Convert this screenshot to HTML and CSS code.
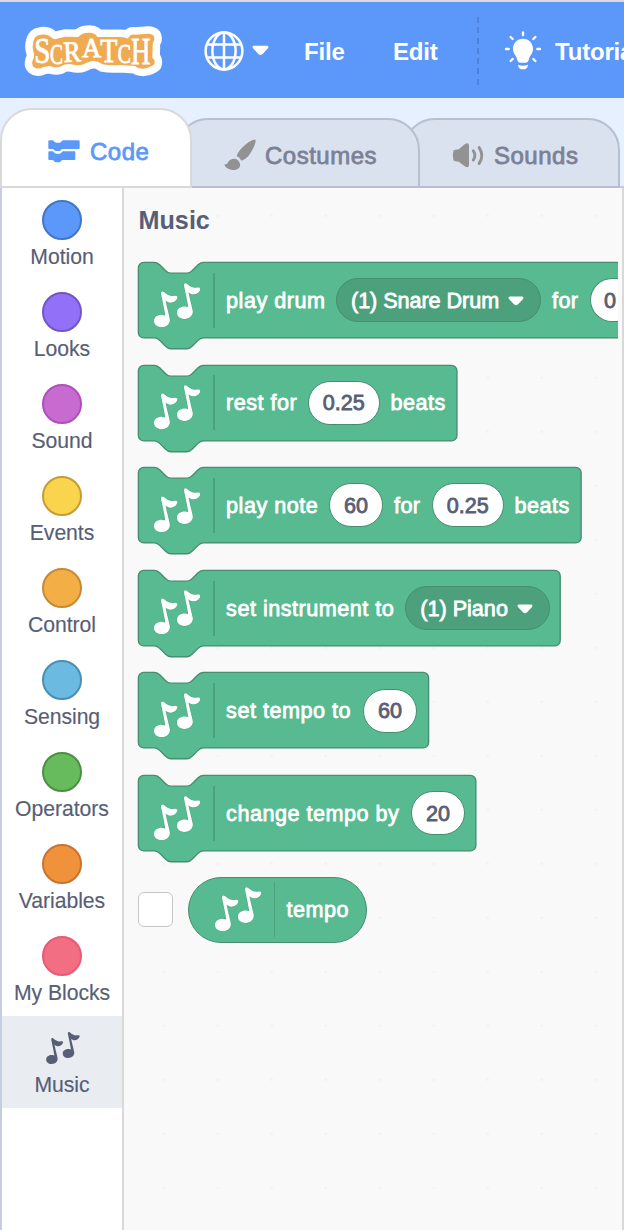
FILE: index.html
```
<!DOCTYPE html>
<html lang="en">
<head>
<meta charset="utf-8">
<title>Scratch - Music extension</title>
<link rel="stylesheet" href="styles.css">
</head>
<body>
<svg class="defs" aria-hidden="true">
  <defs>
    <symbol id="notes" viewBox="102 264 140 133">
      <path d="M123 296C123 289 128 288 132 291C141 299 150 304 160 303C169 301 174 303 172 309C169 319 155 326 145 322C142 321 139 319 137 317C139 330 145 352 149 370C153 385 141 397 125 397C110 397 102 388 102 378C102 366 115 359 127 360C131 360 134 361 136 362C134 345 127 315 123 296Z"/>
      <path d="M123 296C123 289 128 288 132 291C141 299 150 304 160 303C169 301 174 303 172 309C169 319 155 326 145 322C142 321 139 319 137 317C139 330 145 352 149 370C153 385 141 397 125 397C110 397 102 388 102 378C102 366 115 359 127 360C131 360 134 361 136 362C134 345 127 315 123 296Z" transform="translate(69 -25)"/>
    </symbol>
    <symbol id="arrow" viewBox="0 0 16 10">
      <path d="M2.2 0.6H13.8C15.6 0.6 16 2 14.8 3.2L9.8 8.6Q8 10 6.2 8.6L1.2 3.2C0 2 .4 .6 2.2 .6Z"/>
    </symbol>
  </defs>
</svg>

<header class="menu">
  <svg class="logo" viewBox="72 72 417 156">
    <path class="logo-edge" d="M100 122Q104 103 122 101Q144 97 157 112Q164 117 176 112L196 107L235 108Q246 94 270 95Q286 96 292 108L362 108Q374 108 384 113Q390 99 405 101L445 98Q465 98 463 116Q457 124 458 140L457 170Q467 178 463 190Q452 200 430 203Q414 203 405 195Q380 194 362 192Q330 194 308 190Q296 181 280 179Q262 183 250 190Q235 196 214 190Q195 187 180 197Q165 201 150 195Q140 196 130 198Q112 207 101 198Q94 191 98 178Q106 168 100 150Q96 138 100 122Z"/>
    <path class="logo-fill" d="M100 122Q104 103 122 101Q144 97 157 112Q164 117 176 112L196 107L235 108Q246 94 270 95Q286 96 292 108L362 108Q374 108 384 113Q390 99 405 101L445 98Q465 98 463 116Q457 124 458 140L457 170Q467 178 463 190Q452 200 430 203Q414 203 405 195Q380 194 362 192Q330 194 308 190Q296 181 280 179Q262 183 250 190Q235 196 214 190Q195 187 180 197Q165 201 150 195Q140 196 130 198Q112 207 101 198Q94 191 98 178Q106 168 100 150Q96 138 100 122Z"/>
    <g class="logo-text">
      <text transform="translate(103 186) scale(.8 1)" font-size="109">S</text>
      <text transform="translate(150 189) scale(.68 1)" font-size="86">C</text>
      <text transform="translate(192 183) rotate(-3) scale(.88 1)" font-size="88">R</text>
      <text transform="translate(246 168) scale(.95 1)" font-size="84">A</text>
      <text transform="translate(301 184) scale(.86 1)" font-size="98">T</text>
      <text transform="translate(353 186) scale(.74 1)" font-size="80">C</text>
      <text transform="translate(393 188) scale(.72 1)" font-size="112">H</text>
    </g>
  </svg>
  <svg class="globe" viewBox="0 0 40 40">
    <circle cx="20" cy="20" r="18.4"/>
    <ellipse cx="20" cy="20" rx="11.6" ry="18.4"/>
    <path d="M20 1.6V38.4M4 13.5H36M4 26.5H36"/>
  </svg>
  <svg class="menu-arrow"><use href="#arrow"/></svg>
  <span class="menu-item file">File</span>
  <span class="menu-item edit">Edit</span>
  <span class="divider"></span>
  <svg class="bulb" viewBox="0 0 108 116">
    <path class="solid" d="M54 23C72 23 84 37 84 53C84 66 77 71 73 80L70 90Q68 95 62 95H46Q40 95 38 90L35 80C31 71 24 66 24 53C24 37 36 23 54 23ZM39 101Q54 107 69 101Q68 115 54 115Q40 115 39 101Z"/>
    <path class="rays" d="M54 4V12M17 18L23 24M91 18L85 24M3 54H11M97 54H105M17 90L23 84M91 90L85 84"/>
  </svg>
  <span class="menu-item">Tutorials</span>
</header>

<nav class="tabs">
  <div class="tab selected">
    <svg class="code-icon" viewBox="0 0 96 68">
      <path d="M4 1H13C18 1 18 8 25 8H34C41 8 41 1 46 1H92Q95 1 95 4V24Q95 27 92 27H44C39 27 39 33 33 33H25C18 33 18 27 13 27H4Q1 27 1 24V4Q1 1 4 1Z"/>
      <path d="M4 34H13C18 34 18 41 25 41H34C41 41 41 34 46 34H79Q82 34 82 37V57Q82 60 79 60H44C39 60 39 67 33 67H25C18 67 18 60 13 60H4Q1 60 1 57V37Q1 34 4 34Z"/>
    </svg>
    <span>Code</span>
  </div>
  <div class="tab costumes">
    <svg class="brush-icon" viewBox="0 0 96 96">
      <path d="M94 2C98 7 88 32 76 47C70 55 61 62 52 65C48 58 44 54 38 52C41 41 49 31 59 22C71 10 89 0 94 2Z"/>
      <path d="M1 76C10 77 10 74 14 67C20 58 36 56 43 65C50 72 50 82 44 88C33 99 5 92 1 76Z"/>
    </svg>
    <span>Costumes</span>
  </div>
  <div class="tab sounds">
    <svg class="sound-icon" viewBox="0 0 96 76">
      <path d="M4 23Q8 20 20 19L38 4Q50 -3 51 7V67Q50 78 38 71L20 57Q8 56 4 53Q-1 38 4 23Z"/>
      <path class="wave" d="M64 24Q74 38 64 52M82 14Q98 38 82 62"/>
    </svg>
    <span>Sounds</span>
  </div>
</nav>

<main class="workspace">
  <aside class="categories">
    <div class="category"><i class="dot motion"></i>Motion</div>
    <div class="category"><i class="dot looks"></i>Looks</div>
    <div class="category"><i class="dot sound"></i>Sound</div>
    <div class="category"><i class="dot events"></i>Events</div>
    <div class="category"><i class="dot control"></i>Control</div>
    <div class="category"><i class="dot sensing"></i>Sensing</div>
    <div class="category"><i class="dot operators"></i>Operators</div>
    <div class="category"><i class="dot variables"></i>Variables</div>
    <div class="category"><i class="dot my-blocks"></i>My Blocks</div>
    <div class="category current"><svg class="category-notes"><use href="#notes"/></svg>Music</div>
  </aside>

  <section class="palette">
    <h2>Music</h2>
    <div class="block">
      <svg class="shape" viewBox="-1 -1 400 66"><path d="M0 4A4 4 0 0 1 4 0H12c2 0 3 1 4 2l4 4c1 1 2 2 4 2h12c2 0 3-1 4-2l4-4c1-1 2-2 4-2H391a4 4 0 0 1 4 4V52a4 4 0 0 1-4 4H48c-2 0-3 1-4 2l-4 4c-1 1-2 2-4 2h-12c-2 0-3-1-4-2l-4-4c-1-1-2-2-4-2H4a4 4 0 0 1-4-4z"/></svg>
      <div class="row"><svg class="notes"><use href="#notes"/></svg><span class="rule"></span>
        <span class="label drum-label">play drum</span><span class="menu-pill drum"><b>(1) Snare Drum</b><svg><use href="#arrow"/></svg></span><span class="label for">for</span><span class="value cut">0</span></div>
    </div>
    <div class="block">
      <svg class="shape" viewBox="-1 -1 400 66"><path d="M0 4A4 4 0 0 1 4 0H12c2 0 3 1 4 2l4 4c1 1 2 2 4 2h12c2 0 3-1 4-2l4-4c1-1 2-2 4-2H232a4 4 0 0 1 4 4V52a4 4 0 0 1-4 4H48c-2 0-3 1-4 2l-4 4c-1 1-2 2-4 2h-12c-2 0-3-1-4-2l-4-4c-1-1-2-2-4-2H4a4 4 0 0 1-4-4z"/></svg>
      <div class="row"><svg class="notes"><use href="#notes"/></svg><span class="rule"></span>
        <span class="label rest-label">rest for</span><span class="value wide">0.25</span><span class="label">beats</span></div>
    </div>
    <div class="block">
      <svg class="shape" viewBox="-1 -1 400 66"><path d="M0 4A4 4 0 0 1 4 0H12c2 0 3 1 4 2l4 4c1 1 2 2 4 2h12c2 0 3-1 4-2l4-4c1-1 2-2 4-2H324a4 4 0 0 1 4 4V52a4 4 0 0 1-4 4H48c-2 0-3 1-4 2l-4 4c-1 1-2 2-4 2h-12c-2 0-3-1-4-2l-4-4c-1-1-2-2-4-2H4a4 4 0 0 1-4-4z"/></svg>
      <div class="row"><svg class="notes"><use href="#notes"/></svg><span class="rule"></span>
        <span class="label note-label">play note</span><span class="value">60</span><span class="label for">for</span><span class="value wide">0.25</span><span class="label">beats</span></div>
    </div>
    <div class="block">
      <svg class="shape" viewBox="-1 -1 400 66"><path d="M0 4A4 4 0 0 1 4 0H12c2 0 3 1 4 2l4 4c1 1 2 2 4 2h12c2 0 3-1 4-2l4-4c1-1 2-2 4-2H308.500a4 4 0 0 1 4 4V52a4 4 0 0 1-4 4H48c-2 0-3 1-4 2l-4 4c-1 1-2 2-4 2h-12c-2 0-3-1-4-2l-4-4c-1-1-2-2-4-2H4a4 4 0 0 1-4-4z"/></svg>
      <div class="row"><svg class="notes"><use href="#notes"/></svg><span class="rule"></span>
        <span class="label instrument-label">set instrument to</span><span class="menu-pill piano"><b>(1) Piano</b><svg><use href="#arrow"/></svg></span></div>
    </div>
    <div class="block">
      <svg class="shape" viewBox="-1 -1 400 66"><path d="M0 4A4 4 0 0 1 4 0H12c2 0 3 1 4 2l4 4c1 1 2 2 4 2h12c2 0 3-1 4-2l4-4c1-1 2-2 4-2H211a4 4 0 0 1 4 4V52a4 4 0 0 1-4 4H48c-2 0-3 1-4 2l-4 4c-1 1-2 2-4 2h-12c-2 0-3-1-4-2l-4-4c-1-1-2-2-4-2H4a4 4 0 0 1-4-4z"/></svg>
      <div class="row"><svg class="notes"><use href="#notes"/></svg><span class="rule"></span>
        <span class="label set-label">set tempo to</span><span class="value">60</span></div>
    </div>
    <div class="block">
      <svg class="shape" viewBox="-1 -1 400 66"><path d="M0 4A4 4 0 0 1 4 0H12c2 0 3 1 4 2l4 4c1 1 2 2 4 2h12c2 0 3-1 4-2l4-4c1-1 2-2 4-2H246a4 4 0 0 1 4 4V52a4 4 0 0 1-4 4H48c-2 0-3 1-4 2l-4 4c-1 1-2 2-4 2h-12c-2 0-3-1-4-2l-4-4c-1-1-2-2-4-2H4a4 4 0 0 1-4-4z"/></svg>
      <div class="row"><svg class="notes"><use href="#notes"/></svg><span class="rule"></span>
        <span class="label change-label">change tempo by</span><span class="value">20</span></div>
    </div>
    <div class="reporter-row">
      <span class="checkbox"></span>
      <div class="reporter"><svg class="notes"><use href="#notes"/></svg><span class="rule"></span><span class="label">tempo</span></div>
    </div>
  </section>
</main>
</body>
</html>
```
FILE: styles.css
```
* { box-sizing: border-box; }
body {
  margin: 0;
  width: 624px;
  height: 1230px;
  overflow: hidden;
  display: flex;
  flex-direction: column;
  background: #e6f0ff;
  font-family: "Liberation Sans", Arial, sans-serif;
  color: #575e75;
}
.defs { display: none; }
svg { flex: none; overflow: visible; }

.menu {
  height: 98px;
  flex: none;
  display: flex;
  align-items: center;
  padding: 1px 0 0 24px;
  background: #5c98f9;
  border-top: 2px solid #d9d9df;
  white-space: nowrap;
  overflow: hidden;
}
.menu > * { flex: none; }
.logo { width: 139px; height: 52px; }
.logo-edge { fill: #fff; stroke: #fff; stroke-width: 45; stroke-linejoin: round; }
.logo-fill { fill: #efaa52; }
.logo-text {
  font-family: "Liberation Serif", serif;
  fill: #fff;
  stroke: #fff;
  stroke-width: 2.5;
}
.globe { width: 40px; height: 40px; margin-left: 41px; }
.globe * { fill: none; stroke: #fff; stroke-width: 2.5; }
.menu-arrow { width: 17px; height: 11px; margin-left: 8px; fill: #fff; }
.menu-item { font-weight: 700; font-size: 24px; line-height: 28px; padding-top: 2px; color: #fff; letter-spacing: -.2px; }
.file { width: 89px; margin-left: 35px; }
.edit { width: 84px; }
.divider {
  width: 2px;
  height: 68px;
  background: repeating-linear-gradient(#4c82dc 0 6px, transparent 6px 10.3px);
}
.bulb { width: 36px; height: 38.7px; margin: 0 14px 0 26px; }
.bulb .solid { fill: #fff; }
.rays { stroke: #fff; stroke-width: 7; stroke-linecap: round; }

.tabs {
  height: 90px;
  flex: none;
  display: flex;
  align-items: flex-end;
  box-shadow: inset 0 -2px #c4cddb;
}
.tab {
  height: 70px;
  display: flex;
  align-items: center;
  border: 2px solid #b6c0d0;
  border-radius: 32px 32px 0 0;
  background: #dbe2ef;
  color: #7b8196;
  fill: #929292;
  font-size: 24px;
  letter-spacing: .5px;
  -webkit-text-stroke: .8px currentColor;
  padding-top: 5px;
}
.tab svg { -webkit-text-stroke: 0; }
.tab span { padding-top: 1px; }
.tab.selected {
  width: 192px;
  height: 80px;
  padding: 7px 0 0 46px;
  background: #fff;
  border-color: #d9d9d9;
  color: #5c98f9;
  fill: #5c98f9;
  z-index: 3;
}
.tab.costumes { width: 244px; margin-left: -16px; padding-left: 46px; z-index: 2; }
.tab.sounds { width: 217px; margin-left: -17px; padding-left: 47px; z-index: 1; }
.code-icon { width: 32px; height: 22.7px; margin-right: 10px; }
.brush-icon { width: 32px; height: 32px; margin: -2px 9px 0 0; }
.sound-icon { width: 32px; height: 25px; margin-right: 10px; }
.wave { fill: none; stroke: #929292; stroke-width: 9; stroke-linecap: round; }

.workspace { flex: 1; display: flex; min-height: 0; }
.categories {
  width: 124px;
  flex: none;
  background: #fff;
  border-left: 2px solid #c5cee0;
  border-right: 2px solid #d9d9d9;
}
.category {
  height: 92px;
  padding-top: 12px;
  display: flex;
  flex-direction: column;
  align-items: center;
  gap: 5px;
  font-size: 21.2px;
  line-height: 24px;
  white-space: nowrap;
  letter-spacing: -.05px;
  -webkit-text-stroke: .15px currentColor;
}
.category.current { background: #e9edf2; padding-top: 16px; gap: 9px; }
.category-notes { width: 34px; height: 32px; fill: #575e75; margin-left: 2px; }
.dot { width: 40px; height: 40px; flex: none; border-radius: 50%; border: 2px solid; }
.motion { background: #5c98f9; border-color: #4274c8; }
.looks { background: #9270f7; border-color: #7255c6; }
.sound { background: #c76bd0; border-color: #b04fbb; }
.events { background: #fbd44d; border-color: #c79b36; }
.control { background: #f3ae45; border-color: #c68a35; }
.sensing { background: #6bbae2; border-color: #4a8eb4; }
.operators { background: #68bb5c; border-color: #4b9042; }
.variables { background: #f0913b; border-color: #ca7331; }
.my-blocks { background: #f16e83; border-color: #ea5975; }

.palette {
  flex: 1;
  min-width: 0;
  padding: 17px 4px 0 13px;
  border-right: 2px solid #d9d9d9;
  background: radial-gradient(circle, #efefef 0 1.2px, transparent 1.6px) 12.7px .7px / 54px 54px, #f9f9f9;
  overflow: hidden;
}
h2 { margin: 0 0 0 1.5px; height: 56px; font-size: 25.200px; line-height: 31px; }
.block { height: 102.6px; display: grid; overflow: hidden; }
.shape, .row { grid-area: 1 / 1; }
.shape { width: 540px; height: 89.100px; margin: 0; fill: #57ba90; stroke: #468e6f; stroke-width: 1; }
.row {
  height: 76px;
  margin-top: 1.3px;
  display: flex;
  align-items: center;
  white-space: nowrap;
}
.notes {
  width: 46.500px;
  height: 44.200px;
  margin: 9px 0 0 17px;
  fill: #fff;
  stroke: #468e6f;
  stroke-opacity: .35;
  stroke-width: 3;
  paint-order: stroke;
}
.rule { width: 1.4px; height: 55px; flex: none; margin: 0 11.5px 0 12.700px; background: #4aa17c; }
.label, .value, .menu-pill { flex: none; font-size: 21.6px; color: #fff; -webkit-text-stroke: .8px currentColor; }
.label { letter-spacing: .5px; padding-top: 1px; }
.drum-label { width: 110px; }
.rest-label { width: 82px; }
.note-label { width: 103px; }
.instrument-label { width: 179px; }
.set-label { width: 137px; }
.change-label { width: 185px; }
.label.for { width: 27px; letter-spacing: .3px; }
.value, .menu-pill {
  height: 44px;
  display: flex;
  align-items: center;
  justify-content: center;
  border: 1.4px solid #468e6f;
  border-radius: 22px;
}
.value { width: 54px; padding-top: 1px; background: #fff; color: #575e75; }
.wide { width: 71.500px; }
.cut {
  width: 29px;
  justify-content: flex-start;
  padding-left: 13px;
  border-right: 0;
  border-radius: 22px 0 0 22px;
}
.value + .label { margin-left: 11px; }
.menu-pill + .label { margin-left: 11px; }
.for + .value { margin-left: 11px; }
.menu-pill { background: #4ca17c; gap: 9px; }
.menu-pill b { font-weight: 400; padding-top: 1px; }
.menu-pill svg { width: 16px; height: 10px; fill: #fff; margin-top: 1px; }
.drum { width: 205px; padding-right: 2px; }
.drum b { letter-spacing: -.05px; }
.piano { width: 145px; padding-right: 2px; }

.reporter-row { display: flex; align-items: center; height: 66px; }
.checkbox {
  width: 35px;
  height: 35px;
  margin: 0 15px 0 .5px;
  border: 1.5px solid #c6c6c6;
  border-radius: 6px;
  background: #fff;
}
.reporter {
  width: 179.500px;
  height: 66px;
  display: flex;
  align-items: center;
  border: 1.4px solid #468e6f;
  border-radius: 33px;
  background: #57ba90;
}
.reporter .notes { margin: 0 0 0 26px; }
```
